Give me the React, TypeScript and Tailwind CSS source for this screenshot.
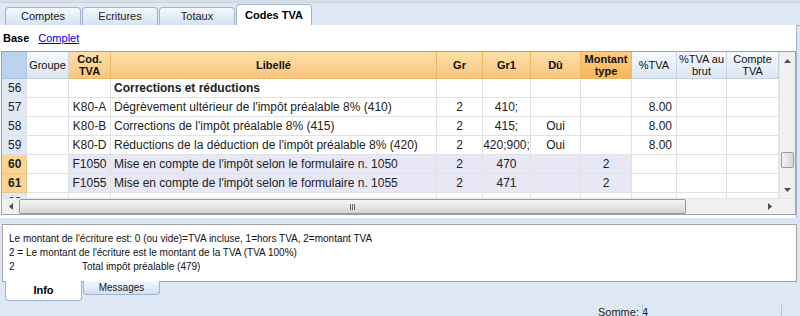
import React from "react";

const cols = "grid grid-cols-[25px_42px_42px_326px_46px_48px_50px_51px_45px_50px_52px]";

type Row = {
  n: string;
  hi?: boolean;
  bold?: boolean;
  cod?: string;
  lib?: string;
  gr?: string;
  gr1?: string;
  du?: string;
  mt?: string;
  tva?: string;
};

const rows: Row[] = [
  { n: "56", bold: true, lib: "Corrections et réductions" },
  { n: "57", cod: "K80-A", lib: "Dégrèvement ultérieur de l'impôt préalable  8% (410)", gr: "2", gr1: "410;", tva: "8.00" },
  { n: "58", cod: "K80-B", lib: "Corrections de l'impôt préalable 8% (415)", gr: "2", gr1: "415;", du: "Oui", tva: "8.00" },
  { n: "59", cod: "K80-D", lib: "Réductions de la déduction de l'impôt préalable 8% (420)", gr: "2", gr1: "420;900;", du: "Oui", tva: "8.00" },
  { n: "60", hi: true, cod: "F1050", lib: "Mise en compte de l'impôt selon le formulaire n. 1050", gr: "2", gr1: "470", mt: "2" },
  { n: "61", hi: true, cod: "F1055", lib: "Mise en compte de l'impôt selon le formulaire n. 1055", gr: "2", gr1: "471", mt: "2" },
  { n: "62" },
];

const Tab = ({ label, active }: { label: string; active?: boolean }) =>
  active ? (
    <div className="w-[76px] h-[21px] mr-[1px] bg-white border border-b-0 border-[#9db3cf] rounded-t-[4px] flex items-center justify-center font-bold text-[11px] text-black">
      {label}
    </div>
  ) : (
    <div className="w-[76px] h-[18px] mr-[1px] bg-gradient-to-b from-[#f4f8fd] to-[#d5e2f3] border border-b-0 border-[#9db3cf] rounded-t-[4px] flex items-center justify-center text-[11px] text-[#222]">
      {label}
    </div>
  );

const HCell = ({ children, kind }: { children?: React.ReactNode; kind: "num" | "blue" | "or" | "or2" }) => {
  const k =
    kind === "num"
      ? "bg-[#bcd3ee] border-[#aec4df]"
      : kind === "blue"
      ? "bg-gradient-to-b from-[#f7f9fc] to-[#dce6f2] border-[#c6d3e3] font-normal"
      : kind === "or"
      ? "bg-gradient-to-b from-[#fde0a8] to-[#f8c57e] border-[#efb869] font-bold"
      : "bg-gradient-to-b from-[#fccc82] to-[#f7b556] border-[#efb869] font-bold";
  return (
    <div className={`h-[27px] border-r border-b flex items-center justify-center text-center leading-[12px] text-[11px] text-[#111] ${k}`}>
      {children}
    </div>
  );
};

const Cell = ({ children, cls }: { children?: React.ReactNode; cls?: string }) => (
  <div className={`h-[19px] border-r border-b border-[#e2e2e2] flex items-center text-[12px] text-[#222] whitespace-nowrap overflow-hidden ${cls ?? ""}`}>
    {children}
  </div>
);

export default function App() {
  return (
    <div className="w-[800px] h-[316px] bg-[#dee8f5] overflow-hidden relative" style={{ fontFamily: '"Liberation Sans", Arial, sans-serif' }}>
      <div className="h-[3px] bg-[#d9dee5] border-b border-[#c9d3df]" />
      {/* top tabs */}
      <div className="h-[23px] flex items-end pl-[5px] border-b border-[#9db3cf]">
        <Tab label="Comptes" />
        <Tab label="Ecritures" />
        <Tab label="Totaux" />
        <Tab label="Codes TVA" active />
      </div>

      {/* main panel */}
      <div className="w-[797px] h-[193px] bg-white border-r border-[#a9b4c2] -mt-[1px] relative">
        <div className="h-[26px] flex items-center pl-[3px] gap-[9px] text-[11px] pt-[1px]">
          <span className="font-bold text-black">Base</span>
          <span className="text-[#0000ee] underline">Complet</span>
        </div>

        <div className="ml-[1px] w-[795px] border border-[#a0a0a0] flex flex-col">
          <div className="flex">
            <div className="w-[777px] flex flex-col">
              <div className={cols}>
                <HCell kind="num" />
                <HCell kind="blue">Groupe</HCell>
                <HCell kind="or">Cod.<br />TVA</HCell>
                <HCell kind="or">Libellé</HCell>
                <HCell kind="or">Gr</HCell>
                <HCell kind="or">Gr1</HCell>
                <HCell kind="or">Dû</HCell>
                <HCell kind="or2">Montant<br />type</HCell>
                <HCell kind="blue">%TVA</HCell>
                <HCell kind="blue">%TVA au<br />brut</HCell>
                <HCell kind="blue">Compte<br />TVA</HCell>
              </div>
              <div className="h-[119px] overflow-hidden">
                {rows.map((r) => {
                  const lav = r.hi ? "bg-[#e7e7f6]" : "";
                  return (
                    <div key={r.n} className={cols}>
                      <Cell cls={r.hi ? "bg-[#fdd591] font-bold text-[11px] pl-[6px] border-[#e7c88f]" : "bg-[#e0e9f5] text-[11px] pl-[6px] border-[#cfdbea]"}>{r.n}</Cell>
                      <Cell />
                      <Cell cls={`justify-center ${lav}`}>{r.cod}</Cell>
                      <Cell cls={`pl-[3px] ${lav} ${r.bold ? "font-bold text-[#111]" : ""}`}>{r.lib}</Cell>
                      <Cell cls={`justify-center ${lav}`}>{r.gr}</Cell>
                      <Cell cls={`justify-center ${lav}`}>{r.gr1}</Cell>
                      <Cell cls={`justify-center ${lav}`}>{r.du}</Cell>
                      <Cell cls={`justify-center ${lav}`}>{r.mt}</Cell>
                      <Cell cls="justify-end pr-[4px]">{r.tva}</Cell>
                      <Cell />
                      <Cell />
                    </div>
                  );
                })}
              </div>
            </div>
            {/* vertical scrollbar */}
            <div className="w-[17px] bg-[#f1f1f1] border-l border-[#e4e4e4] flex flex-col items-center">
              <div className="h-[17px] flex items-center justify-center text-[#555]">
                <svg width="7" height="4" viewBox="0 0 7 4"><path d="M0 4 L3.5 0 L7 4Z" fill="#4d4d4d" /></svg>
              </div>
              <div className="flex-1 w-full relative">
                <div className="absolute left-[1px] right-[1px] top-[83px] h-[16px] rounded-[2px] border border-[#9a9a9a] bg-gradient-to-r from-[#f4f4f4] to-[#d7d7d7]" />
              </div>
              <div className="h-[17px] flex items-center justify-center">
                <svg width="7" height="4" viewBox="0 0 7 4"><path d="M0 0 L7 0 L3.5 4Z" fill="#4d4d4d" /></svg>
              </div>
            </div>
          </div>
          {/* horizontal scrollbar */}
          <div className="h-[16px] flex border-t border-[#e4e4e4]">
            <div className="w-[777px] bg-[#f1f1f1] flex items-center">
              <div className="w-[17px] flex items-center justify-center">
                <svg width="4" height="7" viewBox="0 0 4 7"><path d="M4 0 L0 3.5 L4 7Z" fill="#4d4d4d" /></svg>
              </div>
              <div className="w-[667px] h-[15px] rounded-[2px] border border-[#9a9a9a] bg-gradient-to-b from-[#f6f6f6] to-[#d4d4d4] flex items-center justify-center">
                <div className="flex gap-[1px]">
                  <div className="w-[1px] h-[6px] bg-[#666]" />
                  <div className="w-[1px] h-[6px] bg-[#666]" />
                  <div className="w-[1px] h-[6px] bg-[#666]" />
                </div>
              </div>
              <div className="flex-1" />
              <div className="w-[17px] flex items-center justify-center">
                <svg width="4" height="7" viewBox="0 0 4 7"><path d="M0 0 L4 3.5 L0 7Z" fill="#4d4d4d" /></svg>
              </div>
            </div>
            <div className="w-[17px] bg-[#f1f1f1]" />
          </div>
        </div>
      </div>

      {/* info panel */}
      <div className="mt-[6px] ml-[2px] w-[795px] h-[58px] bg-white border border-[#a3a3a3] pl-[6px] pt-[7px] text-[10px] leading-[14px] text-[#111]">
        <div>Le montant de l'écriture est: 0 (ou vide)=TVA incluse, 1=hors TVA, 2=montant TVA</div>
        <div>2 = Le montant de l'écriture est le montant de la TVA (TVA 100%)</div>
        <div className="flex">
          <span className="w-[73px]">2</span>
          <span>Total impôt préalable (479)</span>
        </div>
      </div>

      {/* bottom tabs */}
      <div className="flex pl-[5px] -mt-[1px] items-start">
        <div className="w-[77px] h-[20px] bg-white border border-t-0 border-[#9db3cf] rounded-b-[4px] flex items-center justify-center font-bold text-[11px] text-black">Info</div>
        <div className="w-[77px] h-[14px] ml-[1px] bg-gradient-to-b from-[#f4f8fd] to-[#d2dff1] border border-t-0 border-[#9db3cf] rounded-b-[4px] flex items-center justify-center text-[10px] text-[#222]">Messages</div>
      </div>

      {/* status bar */}
      <div className="absolute left-0 right-0 bottom-0 h-[11px] flex items-start text-[11px] text-[#222]">
        <div className="w-[598px]" />
        <div className="w-[44px] whitespace-nowrap leading-[13px] mt-[1px]">Somme: 4</div>
        <div className="w-[1px] h-[11px] bg-[#b7c3d3]" />
        <div className="w-[138px]" />
        <div className="w-[1px] h-[11px] bg-[#b7c3d3]" />
      </div>
    </div>
  );
}
